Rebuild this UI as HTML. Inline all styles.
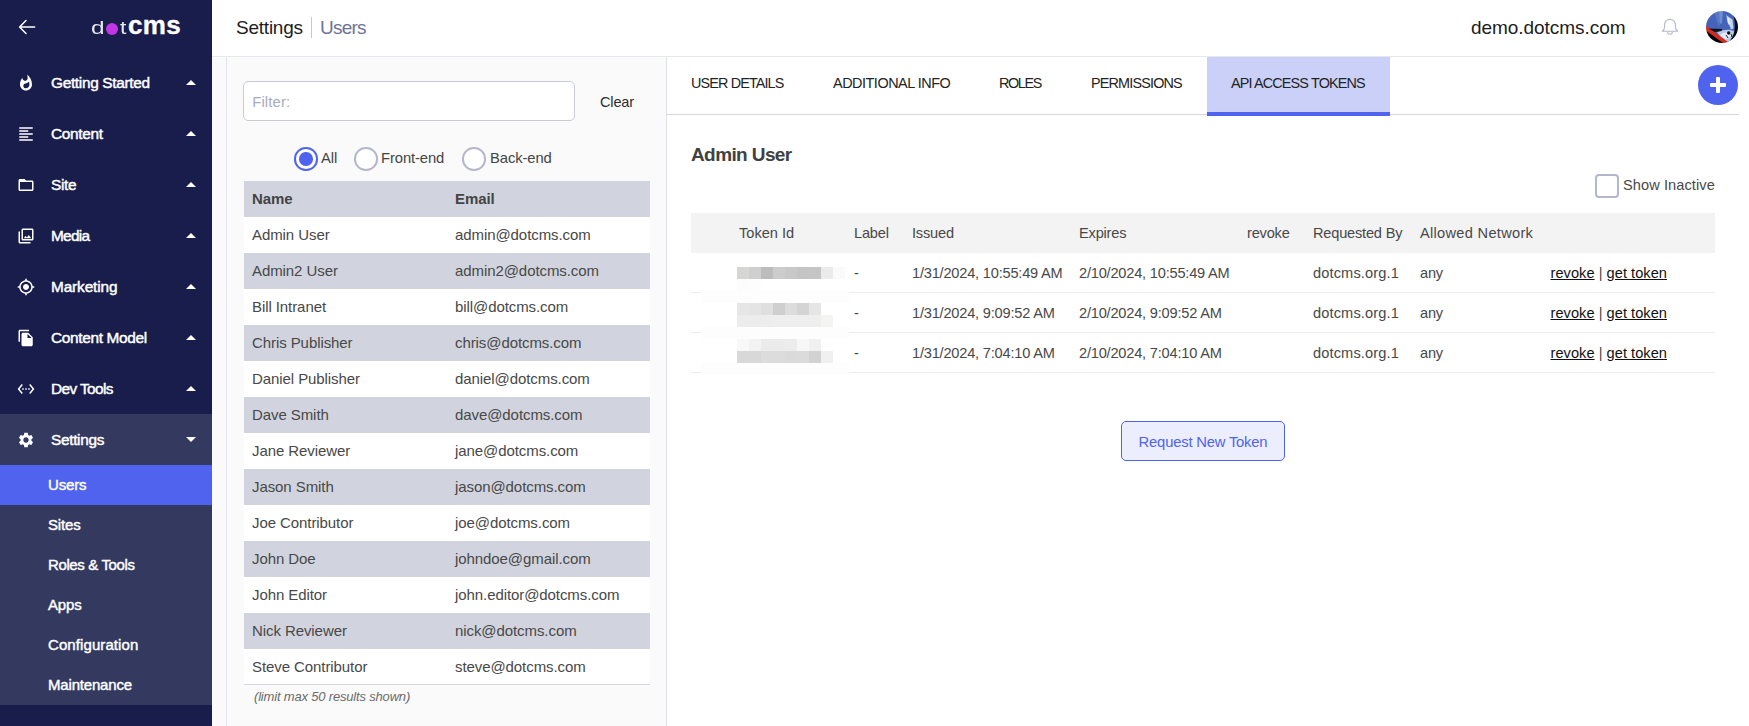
<!DOCTYPE html>
<html lang="en">
<head>
<meta charset="utf-8">
<title>dotCMS - Users</title>
<style>
*{box-sizing:border-box;margin:0;padding:0}
html,body{width:1749px;height:726px;overflow:hidden;background:#fafafa;font-family:"Liberation Sans",sans-serif;color:#3b3b3b}
.abs{position:absolute}
/* sidebar */
#side{position:absolute;left:0;top:0;width:212px;height:726px;background:#181d4c;color:#fff}
#side .open{position:absolute;left:0;top:414px;width:212px;height:291px;background:#343960}
#side .active{position:absolute;left:0;top:465px;width:212px;height:40px;background:#4f63ee}
.mi{margin-top:1.1px;position:absolute;left:51px;font-size:15.4px;font-weight:normal;-webkit-text-stroke:0.45px #fff;letter-spacing:-0.32px;line-height:20px;white-space:nowrap;color:#fff}
.sub{margin-top:0.8px;position:absolute;left:48px;font-size:15px;font-weight:normal;-webkit-text-stroke:0.42px #fff;letter-spacing:-0.18px;line-height:20px;white-space:nowrap;color:#fff}
.car{position:absolute;left:186px;width:0;height:0;border-left:5.3px solid transparent;border-right:5.3px solid transparent;border-bottom:5.6px solid #fff;margin-top:1px}
.car.down{border-bottom:none;border-top:5.6px solid #fff}
.ico{position:absolute;left:17px;width:18px;height:18px;margin-top:1px}
/* header */
#head{position:absolute;left:212px;top:0;width:1537px;height:57px;background:#fff;border-bottom:1px solid #e6e8ef}
/* left panel */
#lp{position:absolute;left:226px;top:57px;width:441px;height:669px;border-left:1px solid #e3e4ea;border-right:1px solid #dfe0e6;background:#fafafa}
#rp{position:absolute;left:667px;top:57px;width:1082px;height:669px;background:#fff}
.utab{position:absolute;left:244px;top:181px;width:406px}
.urow{position:relative;height:36px;font-size:15px;letter-spacing:-0.08px;line-height:36px;color:#484848;white-space:nowrap}
.urow:last-child{height:35px;line-height:35.5px}
.urow.g{background:#d1d4de}
.urow.w{background:#fff}
.urow span{position:absolute;top:0}
.urow .n{left:8px}
.urow .e{left:211px}
.urow.h{font-weight:bold;color:#444;background:#d1d4de}
.tab{position:absolute;top:57px;height:58px;line-height:52px;font-size:14.4px;color:#222;white-space:nowrap;text-align:left;padding-left:24px}
.tt{position:absolute;font-size:14.6px;letter-spacing:-0.2px;line-height:20px;color:#484848;white-space:nowrap}
.tt a{color:#111;text-decoration:underline}

.logo{position:absolute;left:0;top:0;width:212px;height:56px}
.logo span{position:absolute;line-height:1;white-space:nowrap;color:#fff}
.logo .ld{left:91.2px;top:20.1px;font-size:17.7px;transform:scaleX(1.38);transform-origin:0 0;opacity:.9}
.logo .lo{left:106.3px;top:22.5px;width:12px;height:12px;border-radius:50%;background:#c336e5;color:transparent;font-size:9px;overflow:hidden}
.logo .lt2{left:120px;top:20.1px;font-size:17.7px;transform:scaleX(1.3);transform-origin:0 0;opacity:.9}
.logo .lc{left:128px;top:12.2px;font-size:26px;font-weight:bold;letter-spacing:0.35px;-webkit-text-stroke:0.35px #fff}
.h1{font-size:19px;line-height:26px;letter-spacing:-0.23px;color:#1c1c22;white-space:nowrap;margin-top:0.7px}
.h1.crumb{color:#6c7398;letter-spacing:-0.75px}
.h1.site{color:#1c1c22;letter-spacing:-0.05px}
.filter{position:absolute;left:16.2px;top:24px;width:332.3px;height:40px;border:1px solid #c9cbdb;border-radius:5px;background:#fff;padding-left:8px;line-height:40.5px;font-size:14.8px;letter-spacing:0.15px;color:#a7abc2}
.clear{font-size:14.6px;letter-spacing:-0.2px;line-height:20px;color:#2d2d2d}
.radio{position:absolute;width:23.6px;height:23.6px;border-radius:50%;border:2px solid #b4b7cb;background:#fff}
.radio.on{border-color:#4f63ee}
.radio.on:after{content:"";position:absolute;left:3.1px;top:3.1px;width:13.4px;height:13.4px;border-radius:50%;background:#4f63ee}
.rl{font-size:14.8px;letter-spacing:-0.1px;line-height:20px;color:#444;white-space:nowrap}
.utab{left:17px;top:124px;border-bottom:1px solid #d7d8df}
.limit{font-size:13px;font-style:italic;letter-spacing:-0.18px;color:#6a6a6a;line-height:16px;white-space:nowrap;margin-top:1.5px}
.tabline{position:absolute;left:0;top:57px;width:1072px;height:1px;background:#d5d7df}
#rp .tab{top:0}
.tab.on{background:#cad0f7;border-bottom:4px solid #4f63ee;height:59px}
.plus{position:absolute;left:1031px;top:8px;width:40px;height:40px;border-radius:50%;background:#4f63ee}
.plus i{position:absolute;left:12px;top:18.2px;width:16px;height:3.6px;background:#fff;border-radius:1px}
.plus b{position:absolute;left:18.2px;top:12px;width:3.6px;height:16px;background:#fff;border-radius:1px}
.uname{font-size:19px;font-weight:bold;letter-spacing:-0.6px;line-height:24px;color:#414141;margin-top:1px;white-space:nowrap}
.cb{width:24px;height:24px;border:2px solid #b4b7cb;border-radius:4px;background:#fff}
.thead{position:absolute;left:24px;top:156px;width:1024px;height:40px;background:#f3f3f4}
.trow{position:absolute;left:24px;width:1024px;height:40px;border-bottom:1px solid #ececee}
.px{position:absolute;width:12px;height:12px;display:block}
.btn{position:absolute;left:454px;top:364px;width:164px;height:40px;border:1px solid #4f63ee;border-radius:5px;background:#eceefd;color:#4f63ee;font-size:14.8px;letter-spacing:-0.2px;line-height:40px;text-align:center;white-space:nowrap}
</style>
</head>
<body>
<div id="side">
  <div class="open"></div>
  <div class="active"></div>
  <svg class="abs" style="left:15px;top:15px" width="24" height="24" viewBox="0 0 24 24" fill="none" stroke="#fff" stroke-width="1.5" stroke-linecap="round" stroke-linejoin="round"><path d="M19.6 12H4.8M11 5.500l-6.400 6.500 6.400 6.500"/></svg>
  <div class="logo"><span class="ld">d</span><span class="lo">o</span><span class="lt2">t</span><span class="lc">cms</span></div>
  <svg class="ico" style="top:73px" viewBox="0 0 24 24"><path fill="#fff" d="M13.5.67s.74 2.65.74 4.8c0 2.06-1.35 3.73-3.41 3.73-2.07 0-3.63-1.67-3.63-3.73l.03-.36C5.21 7.51 4 10.62 4 14c0 4.42 3.58 8 8 8s8-3.58 8-8C20 8.61 17.41 3.8 13.5.67zM11.71 19c-1.78 0-3.22-1.4-3.22-3.14 0-1.62 1.05-2.76 2.81-3.12 1.77-.36 3.6-1.21 4.62-2.58.39 1.29.59 2.65.59 4.04 0 2.65-2.15 4.8-4.8 4.8z"/></svg>
  <div class="mi" style="top:72px">Getting Started</div>
  <div class="car" style="top:79px"></div>
  <svg class="ico" style="top:124px" viewBox="0 0 24 24"><path fill="#fff" d="M15 15H3v2h12v-2zm0-8H3v2h12V7zM3 13h18v-2H3v2zm0 8h18v-2H3v2zM3 3v2h18V3H3z"/></svg>
  <div class="mi" style="top:123px">Content</div>
  <div class="car" style="top:130px"></div>
  <svg class="ico" style="top:175px" viewBox="0 0 24 24"><path fill="#fff" d="M20 6h-8l-2-2H4c-1.1 0-1.99.9-1.99 2L2 18c0 1.1.9 2 2 2h16c1.1 0 2-.9 2-2V8c0-1.1-.9-2-2-2zm0 12H4V8h16v10z"/></svg>
  <div class="mi" style="top:174px">Site</div>
  <div class="car" style="top:181px"></div>
  <svg class="ico" style="top:226px" viewBox="0 0 24 24"><path fill="#fff" d="M20 4v12H8V4h12m0-2H8c-1.1 0-2 .9-2 2v12c0 1.1.9 2 2 2h12c1.1 0 2-.9 2-2V4c0-1.1-.9-2-2-2zm-8.5 9.67l1.69 2.26 2.48-3.1L19 15H9zM2 6v14c0 1.1.9 2 2 2h14v-2H4V6H2z"/></svg>
  <div class="mi" style="top:225px;letter-spacing:-0.74px">Media</div>
  <div class="car" style="top:232px"></div>
  <svg class="ico" style="top:277px" viewBox="0 0 24 24"><path fill="#fff" d="M12 8c-2.21 0-4 1.79-4 4s1.79 4 4 4 4-1.79 4-4-1.79-4-4-4zm8.94 3c-.46-4.17-3.77-7.48-7.94-7.94V1h-2v2.06C6.83 3.52 3.52 6.83 3.06 11H1v2h2.06c.46 4.17 3.77 7.48 7.94 7.94V23h2v-2.06c4.17-.46 7.48-3.77 7.94-7.94H23v-2h-2.06zM12 19c-3.87 0-7-3.13-7-7s3.13-7 7-7 7 3.13 7 7-3.13 7-7 7z"/></svg>
  <div class="mi" style="top:276px;letter-spacing:-0.14px">Marketing</div>
  <div class="car" style="top:283px"></div>
  <svg class="ico" style="top:328px" viewBox="0 0 24 24"><path fill="#fff" d="M16 1H4c-1.1 0-2 .9-2 2v14h2V3h12V1zm-1 4l6 6v10c0 1.1-.9 2-2 2H7.99C6.89 23 6 22.1 6 21l.01-14c0-1.1.89-2 1.99-2h7zm-1 7h5.5L14 6.5V12z"/></svg>
  <div class="mi" style="top:327px">Content Model</div>
  <div class="car" style="top:334px"></div>
  <svg class="ico" style="top:379px" viewBox="0 0 24 24"><path fill="#fff" d="M7.77 6.76L6.23 5.48.82 12l5.41 6.52 1.54-1.28L3.42 12l4.35-5.24zM7 13h2v-2H7v2zm10-2h-2v2h2v-2zm-6 2h2v-2h-2v2zm6.77-7.52l-1.54 1.28L20.58 12l-4.35 5.24 1.54 1.28L23.18 12l-5.41-6.52z"/></svg>
  <div class="mi" style="top:378px;letter-spacing:-0.6px">Dev Tools</div>
  <div class="car" style="top:385px"></div>
  <svg class="ico" style="top:430px" viewBox="0 0 24 24"><path fill="#fff" d="M19.14 12.94c.04-.3.06-.61.06-.94 0-.32-.02-.64-.07-.94l2.03-1.58c.18-.14.23-.41.12-.61l-1.92-3.32c-.12-.22-.37-.29-.59-.22l-2.39.96c-.5-.38-1.03-.7-1.62-.94l-.36-2.54c-.04-.24-.24-.41-.48-.41h-3.84c-.24 0-.43.17-.47.41l-.36 2.54c-.59.24-1.13.57-1.62.94l-2.39-.96c-.22-.08-.47 0-.59.22L2.74 8.87c-.12.21-.08.47.12.61l2.03 1.58c-.05.3-.09.63-.09.94s.02.64.07.94l-2.03 1.58c-.18.14-.23.41-.12.61l1.92 3.32c.12.22.37.29.59.22l2.39-.96c.5.38 1.03.7 1.62.94l.36 2.54c.05.24.24.41.48.41h3.84c.24 0 .44-.17.47-.41l.36-2.54c.59-.24 1.13-.56 1.62-.94l2.39.96c.22.08.47 0 .59-.22l1.92-3.32c.12-.22.07-.47-.12-.61l-2.01-1.58zM12 15.6c-1.98 0-3.6-1.62-3.6-3.6s1.62-3.6 3.6-3.6 3.6 1.62 3.6 3.6-1.62 3.6-3.6 3.6z"/></svg>
  <div class="mi" style="top:429px">Settings</div>
  <div class="car down" style="top:436px"></div>
  <div class="sub" style="top:474px">Users</div>
  <div class="sub" style="top:514px">Sites</div>
  <div class="sub" style="top:554px;letter-spacing:-0.38px">Roles &amp; Tools</div>
  <div class="sub" style="top:594px">Apps</div>
  <div class="sub" style="top:634px;letter-spacing:0.09px">Configuration</div>
  <div class="sub" style="top:674px">Maintenance</div>
</div>
<div id="head">
  <div class="abs h1" style="left:24px;top:14px">Settings</div>
  <div class="abs" style="left:99px;top:17px;width:1px;height:21px;background:#c5c8d6"></div>
  <div class="abs h1 crumb" style="left:108px;top:14px">Users</div>
  <div class="abs h1 site" style="left:1259px;top:14px">demo.dotcms.com</div>
  <svg class="abs" style="left:1448px;top:17px" width="20" height="20" viewBox="0 0 20 20" fill="none" stroke="#b3b7c9" stroke-width="1.1" stroke-linejoin="round" stroke-linecap="round"><path d="M2.3 14.3h15.4c-1.6-1.2-2.3-2.6-2.3-4.6V7.6c0-3-2.2-5.2-5.4-5.2S4.6 4.600 4.600 7.600v2.100c0 2-.7 3.400-2.300 4.600z"/><path d="M7.600 15.300c.2 1.200 1.100 1.900 2.400 1.900s2.200-.7 2.400-1.900"/></svg>
  <svg class="abs" style="left:1494px;top:11px" width="32" height="32" viewBox="0 0 32 32"><defs><clipPath id="av"><circle cx="16" cy="16" r="16"/></clipPath><filter id="bl" x="-10%" y="-10%" width="120%" height="120%"><feGaussianBlur stdDeviation="0.55"/></filter></defs><g clip-path="url(#av)"><g filter="url(#bl)"><rect x="-2" y="-2" width="36" height="36" fill="#4464b9"/><path d="M8 0l3 10 2 6 3-16z" fill="#5878c6"/><path d="M13 0l1 13 2-1 1-12z" fill="#6f8cd2"/><path d="M20 4c1.500 3 .5 6 2 8.500s3 3.500 2.500 6l3-1-1-9z" fill="#c4d4ef"/><path d="M22 7l1.500 6" stroke="#eef3fb" stroke-width="1.200" fill="none"/><path d="M11 21c4-1.500 9-2.500 13-2l5 1-2 8-8 4z" fill="#b9c9e8"/><path d="M14 24c3-2 7-3 10-2.500l2 3-6 4z" fill="#e4ecf8"/><path d="M24.500-2c5 3 8 9 8 16s-3 13-7 17l-1.500-1.500c6-7 7-20 .5-31.500z" fill="#06070c"/><path d="M-2 13.400l24 17.600-2 4-22-6z" fill="#d42a1b"/><path d="M-2 18.200l22 15.800H-2z" fill="#060608"/><path d="M3 17.500l13.500.6-1 1.800-6.500 1.300z" fill="#111218"/><circle cx="22.700" cy="22" r="1.700" fill="#0c0d12"/><path d="M20 24l2 3M25 23l1 3" stroke="#1a1c26" stroke-width="1"/></g></g></svg>
</div>
<div id="lp">
  <div class="filter"><span>Filter:</span></div>
  <div class="abs clear" style="left:373px;top:34.8px">Clear</div>
  <div class="radio on" style="left:67.1px;top:90.2px"></div><div class="abs rl" style="left:94px;top:90.9px">All</div>
  <div class="radio" style="left:127.1px;top:90.2px"></div><div class="abs rl" style="left:154px;top:90.9px">Front-end</div>
  <div class="radio" style="left:235.1px;top:90.2px"></div><div class="abs rl" style="left:263px;top:90.9px">Back-end</div>
  <div class="utab">
    <div class="urow h"><span class="n">Name</span><span class="e">Email</span></div>
    <div class="urow w"><span class="n">Admin User</span><span class="e">admin@dotcms.com</span></div>
    <div class="urow g"><span class="n">Admin2 User</span><span class="e">admin2@dotcms.com</span></div>
    <div class="urow w"><span class="n">Bill Intranet</span><span class="e">bill@dotcms.com</span></div>
    <div class="urow g"><span class="n">Chris Publisher</span><span class="e">chris@dotcms.com</span></div>
    <div class="urow w"><span class="n">Daniel Publisher</span><span class="e">daniel@dotcms.com</span></div>
    <div class="urow g"><span class="n">Dave Smith</span><span class="e">dave@dotcms.com</span></div>
    <div class="urow w"><span class="n">Jane Reviewer</span><span class="e">jane@dotcms.com</span></div>
    <div class="urow g"><span class="n">Jason Smith</span><span class="e">jason@dotcms.com</span></div>
    <div class="urow w"><span class="n">Joe Contributor</span><span class="e">joe@dotcms.com</span></div>
    <div class="urow g"><span class="n">John Doe</span><span class="e">johndoe@gmail.com</span></div>
    <div class="urow w"><span class="n">John Editor</span><span class="e">john.editor@dotcms.com</span></div>
    <div class="urow g"><span class="n">Nick Reviewer</span><span class="e">nick@dotcms.com</span></div>
    <div class="urow w"><span class="n">Steve Contributor</span><span class="e">steve@dotcms.com</span></div>
  </div>
  <div class="abs limit" style="left:27px;top:630px">(limit max 50 results shown)</div>
</div>
<div id="rp">
  <div class="tabline"></div>
  <div class="tab" style="left:0px;width:142px;letter-spacing:-0.87px">USER DETAILS</div>
  <div class="tab" style="left:142px;width:166px;letter-spacing:-0.46px">ADDITIONAL INFO</div>
  <div class="tab" style="left:308px;width:92px;letter-spacing:-1.36px">ROLES</div>
  <div class="tab" style="left:400px;width:140px;letter-spacing:-0.83px">PERMISSIONS</div>
  <div class="tab on" style="left:540px;width:183px;letter-spacing:-0.85px">API ACCESS TOKENS</div>
  <div class="plus"><i></i><b></b></div>
  <div class="abs uname" style="left:24px;top:85px">Admin User</div>
  <div class="abs cb" style="left:928px;top:117px"></div>
  <div class="tt" style="left:956px;top:117.8px;letter-spacing:0.08px">Show Inactive</div>
  <div class="thead">
    <span class="tt" style="left:48px;top:10px;letter-spacing:0px">Token Id</span>
    <span class="tt" style="left:163px;top:10px">Label</span>
    <span class="tt" style="left:221px;top:10px">Issued</span>
    <span class="tt" style="left:388px;top:10px">Expires</span>
    <span class="tt" style="left:556px;top:10px">revoke</span>
    <span class="tt" style="left:622px;top:10px">Requested By</span>
    <span class="tt" style="left:729px;top:10px;letter-spacing:0.3px">Allowed Network</span>
  </div>
  <div class="trow" style="top:196px">
    <span class="tt" style="left:163px;top:10px">-</span>
    <span class="tt" style="left:221px;top:10px">1/31/2024, 10:55:49 AM</span>
    <span class="tt" style="left:388px;top:10px">2/10/2024, 10:55:49 AM</span>
    <span class="tt" style="left:622px;top:10px;letter-spacing:0.13px">dotcms.org.1</span>
    <span class="tt" style="left:729px;top:10px">any</span>
    <span class="tt" style="left:859.5px;top:10px;letter-spacing:0.04px"><a>revoke</a> | <a>get token</a></span>
  </div>
  <div class="trow" style="top:236px">
    <span class="tt" style="left:163px;top:10px">-</span>
    <span class="tt" style="left:221px;top:10px">1/31/2024, 9:09:52 AM</span>
    <span class="tt" style="left:388px;top:10px">2/10/2024, 9:09:52 AM</span>
    <span class="tt" style="left:622px;top:10px;letter-spacing:0.13px">dotcms.org.1</span>
    <span class="tt" style="left:729px;top:10px">any</span>
    <span class="tt" style="left:859.5px;top:10px;letter-spacing:0.04px"><a>revoke</a> | <a>get token</a></span>
  </div>
  <div class="trow" style="top:276px">
    <span class="tt" style="left:163px;top:10px">-</span>
    <span class="tt" style="left:221px;top:10px">1/31/2024, 7:04:10 AM</span>
    <span class="tt" style="left:388px;top:10px">2/10/2024, 7:04:10 AM</span>
    <span class="tt" style="left:622px;top:10px;letter-spacing:0.13px">dotcms.org.1</span>
    <span class="tt" style="left:729px;top:10px">any</span>
    <span class="tt" style="left:859.5px;top:10px;letter-spacing:0.04px"><a>revoke</a> | <a>get token</a></span>
  </div>
  <i class="px" style="left:34px;top:234px;width:148px;background:#fdfdfd"></i>
  <i class="px" style="left:34px;top:270px;width:148px;background:#fdfdfd"></i>
  <i class="px" style="left:34px;top:306px;width:148px;background:#fdfdfd"></i>
  <i class="px" style="left:70px;top:210px;background:#d6d6d4"></i>
  <i class="px" style="left:82px;top:210px;background:#cfcfcf"></i>
  <i class="px" style="left:94px;top:210px;background:#bcbcbc"></i>
  <i class="px" style="left:106px;top:210px;background:#cccccc"></i>
  <i class="px" style="left:118px;top:210px;background:#c8c8c8"></i>
  <i class="px" style="left:130px;top:210px;background:#c4c4c4"></i>
  <i class="px" style="left:142px;top:210px;background:#c5c5c5"></i>
  <i class="px" style="left:154px;top:210px;background:#ebebeb"></i>
  <i class="px" style="left:166px;top:210px;background:#fafafa"></i>
  <i class="px" style="left:70px;top:222px;background:#fcfcfc"></i>
  <i class="px" style="left:82px;top:222px;background:#fdfdfd"></i>
  <i class="px" style="left:70px;top:246px;background:#e6e6e6"></i>
  <i class="px" style="left:82px;top:246px;background:#e4e4e4"></i>
  <i class="px" style="left:94px;top:246px;background:#dfdfdf"></i>
  <i class="px" style="left:106px;top:246px;background:#cfcfcf"></i>
  <i class="px" style="left:118px;top:246px;background:#dcdcdc"></i>
  <i class="px" style="left:130px;top:246px;background:#d4d4d4"></i>
  <i class="px" style="left:142px;top:246px;background:#e5e5e5"></i>
  <i class="px" style="left:70px;top:258px;background:#ececec"></i>
  <i class="px" style="left:82px;top:258px;background:#ececec"></i>
  <i class="px" style="left:94px;top:258px;background:#ededed"></i>
  <i class="px" style="left:106px;top:258px;background:#eeeeee"></i>
  <i class="px" style="left:118px;top:258px;background:#eeeeee"></i>
  <i class="px" style="left:130px;top:258px;background:#eeeeee"></i>
  <i class="px" style="left:142px;top:258px;background:#eeeeee"></i>
  <i class="px" style="left:154px;top:258px;background:#f4f4f2"></i>
  <i class="px" style="left:70px;top:282px;background:#f8f8f8"></i>
  <i class="px" style="left:82px;top:282px;background:#f2f2f2"></i>
  <i class="px" style="left:94px;top:282px;background:#ebebeb"></i>
  <i class="px" style="left:106px;top:282px;background:#ebebeb"></i>
  <i class="px" style="left:118px;top:282px;background:#ececec"></i>
  <i class="px" style="left:130px;top:282px;background:#f7f7f7"></i>
  <i class="px" style="left:142px;top:282px;background:#f0f0f0"></i>
  <i class="px" style="left:70px;top:294px;background:#d8d8d8"></i>
  <i class="px" style="left:82px;top:294px;background:#d8d8d8"></i>
  <i class="px" style="left:94px;top:294px;background:#dcdcdc"></i>
  <i class="px" style="left:106px;top:294px;background:#dcdcdc"></i>
  <i class="px" style="left:118px;top:294px;background:#dadada"></i>
  <i class="px" style="left:130px;top:294px;background:#dbdbdb"></i>
  <i class="px" style="left:142px;top:294px;background:#d2d2d2"></i>
  <i class="px" style="left:154px;top:294px;background:#f0f0f0"></i>
  <div class="btn">Request New Token</div>
</div>
</body>
</html>
